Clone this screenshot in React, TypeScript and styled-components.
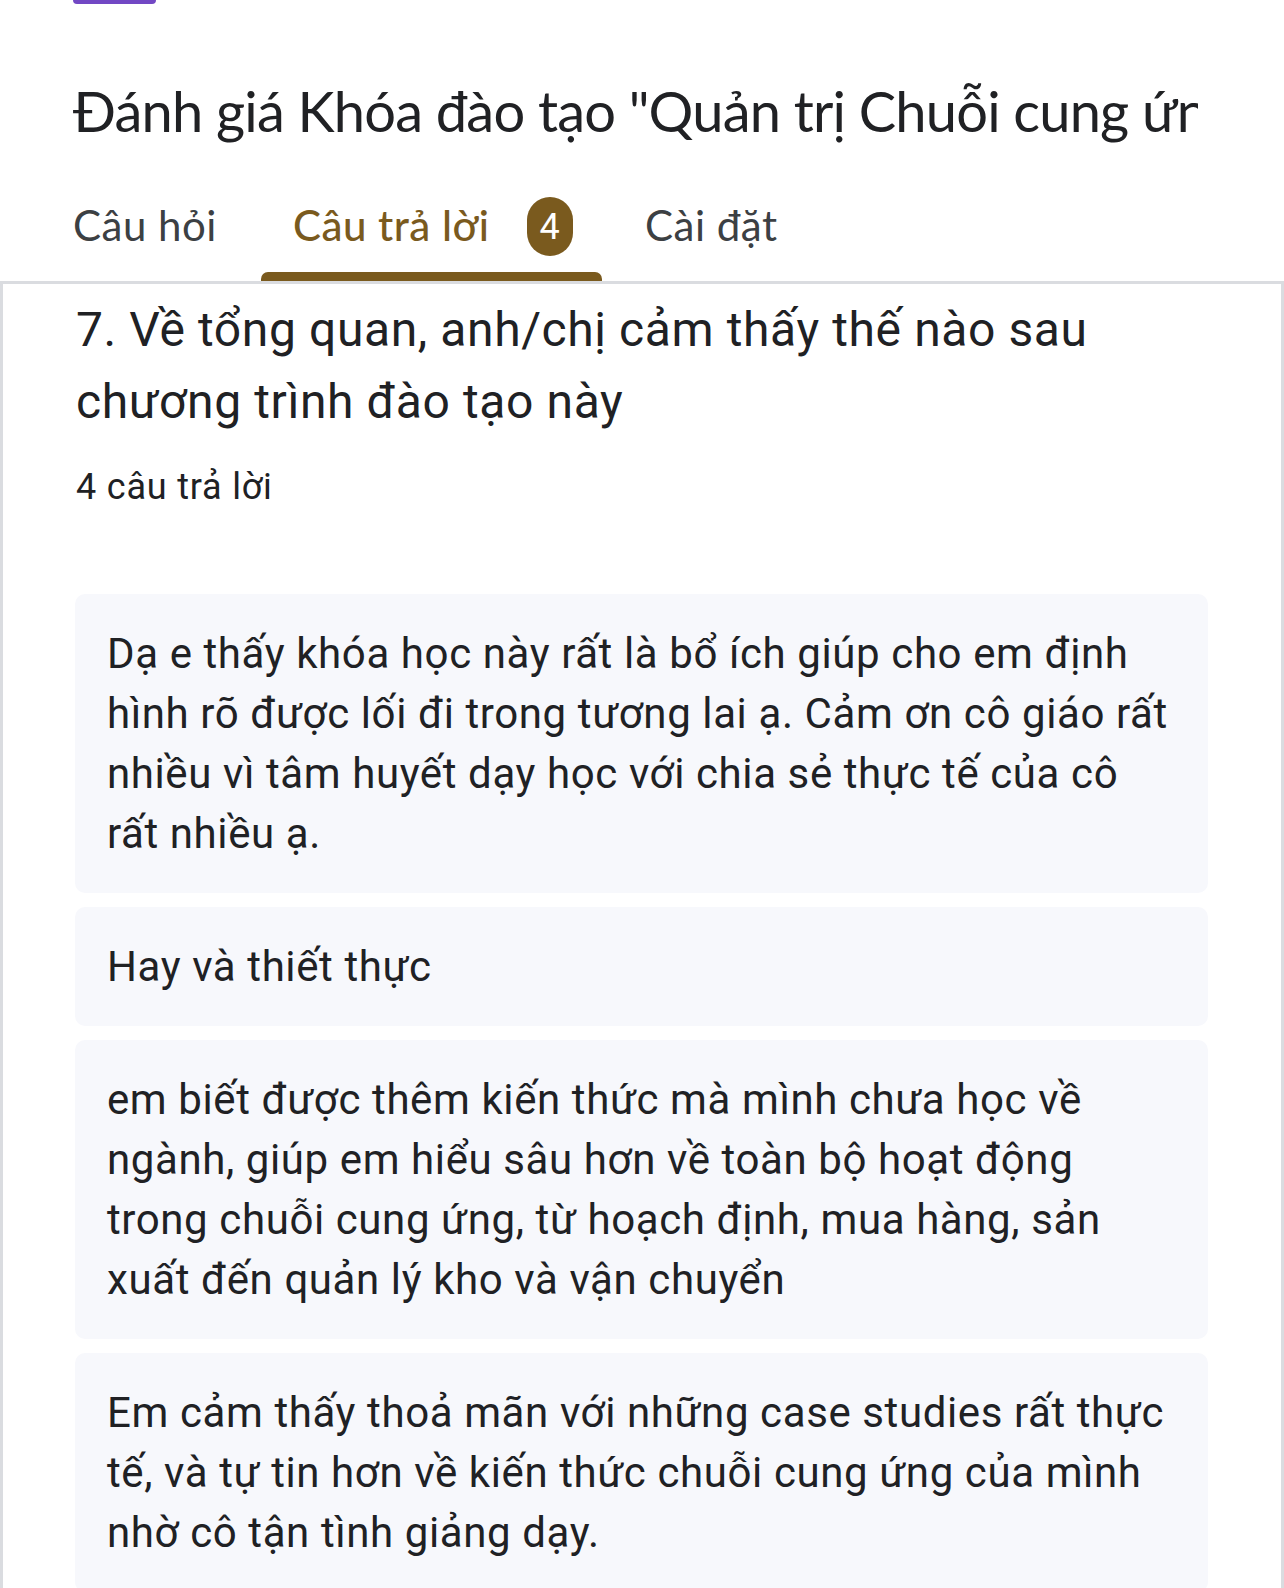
import React from "react";
import styled, { createGlobalStyle } from "styled-components";

const GlobalStyle = createGlobalStyle`
  html, body {
    margin: 0;
    padding: 0;
    background: #ffffff;
  }
  body {
    width: 1284px;
    height: 1588px;
    overflow: hidden;
    font-family: Roboto, "Liberation Sans", sans-serif;
    -webkit-font-smoothing: antialiased;
  }
  * { box-sizing: border-box; }
`;

const Page = styled.div`
  width: 1284px;
  height: 1588px;
  display: flex;
  flex-direction: column;
  overflow: hidden;
  background: #ffffff;
`;

const Header = styled.header`
  display: flex;
  flex-direction: column;
`;

const AccentBar = styled.div`
  margin-left: 73px;
  width: 83px;
  height: 4px;
  background: #7248c4;
  border-radius: 0 0 4px 4px;
`;

const Title = styled.h1`
  margin: 67px 0 0 73px;
  width: 1125px;
  overflow: hidden;
  white-space: nowrap;
  font-family: Lato, "Liberation Sans", sans-serif;
  font-weight: 400;
  font-size: 56px;
  line-height: 80px;
  letter-spacing: -0.8px;
  color: #202124;
`;

const Tabs = styled.nav`
  display: flex;
  align-items: flex-end;
  margin-top: 40px;
  padding-left: 73px;
`;

const Tab = styled.div<{ $active?: boolean; $width: number; $pad: number }>`
  position: relative;
  display: flex;
  align-items: center;
  gap: 37px;
  width: ${(p) => p.$width}px;
  height: 90px;
  padding: 0 0 23px ${(p) => p.$pad}px;
  font-family: Lato, "Liberation Sans", sans-serif;
  font-size: 42px;
  letter-spacing: 0.5px;
  font-weight: ${(p) => (p.$active ? 500 : 400)};
  color: ${(p) => (p.$active ? "#7a5a1e" : "#3c4043")};
`;

const Indicator = styled.span`
  position: absolute;
  left: 0;
  right: 0;
  bottom: 0;
  height: 9px;
  background: #7a5a1e;
  border-radius: 7px 7px 0 0;
`;

const Badge = styled.span`
  display: inline-flex;
  align-items: center;
  justify-content: center;
  width: 46px;
  height: 59px;
  margin-top: 4px;
  border-radius: 23px;
  background: #7a5a1e;
  color: #ffffff;
  font-family: Roboto, "Liberation Sans", sans-serif;
  font-size: 36px;
  letter-spacing: 0;
  font-weight: 400;
`;

const Card = styled.section`
  flex: 1;
  display: flex;
  flex-direction: column;
  border: 3px solid #dadce0;
  border-bottom: none;
  padding: 10px 73px 0 72px;
  background: #ffffff;
`;

const Question = styled.h2`
  margin: 0;
  padding-left: 1px;
  font-family: Roboto, "Liberation Sans", sans-serif;
  font-weight: 400;
  font-size: 48px;
  line-height: 72px;
  letter-spacing: 0.6px;
  color: #202124;
`;

const Count = styled.div`
  margin-top: 22px;
  padding-left: 1px;
  font-family: Roboto, "Liberation Sans", sans-serif;
  font-size: 36px;
  line-height: 54px;
  letter-spacing: 0.8px;
  color: #202124;
`;

const Answers = styled.div`
  display: flex;
  flex-direction: column;
  gap: 14px;
  margin-top: 80px;
`;

const Answer = styled.div`
  background: #f7f8fc;
  border-radius: 10px;
  padding: 30px 20px 29px 32px;
  font-family: Roboto, "Liberation Sans", sans-serif;
  font-size: 42px;
  line-height: 60px;
  letter-spacing: 0.6px;
  color: #202124;
`;

const answers: string[][] = [
  [
    "Dạ e thấy khóa học này rất là bổ ích giúp cho em định",
    "hình rõ được lối đi trong tương lai ạ. Cảm ơn cô giáo rất",
    "nhiều vì tâm huyết dạy học với chia sẻ thực tế của cô",
    "rất nhiều ạ.",
  ],
  ["Hay và thiết thực"],
  [
    "em biết được thêm kiến thức mà mình chưa học về",
    "ngành, giúp em hiểu sâu hơn về toàn bộ hoạt động",
    "trong chuỗi cung ứng, từ hoạch định, mua hàng, sản",
    "xuất đến quản lý kho và vận chuyển",
  ],
  [
    "Em cảm thấy thoả mãn với những case studies rất thực",
    "tế, và tự tin hơn về kiến thức chuỗi cung ứng của mình",
    "nhờ cô tận tình giảng dạy.",
  ],
];

export default function App() {
  return (
    <>
      <GlobalStyle />
      <Page>
        <Header>
          <AccentBar />
          <Title>Đánh giá Khóa đào tạo "Quản trị Chuỗi cung ứng"</Title>
          <Tabs>
            <Tab $width={188} $pad={0}>Câu hỏi</Tab>
            <Tab $active $width={341} $pad={32}>
              Câu trả lời
              <Badge>4</Badge>
              <Indicator />
            </Tab>
            <Tab $width={320} $pad={43}>Cài đặt</Tab>
          </Tabs>
        </Header>
        <Card>
          <Question>
            7. Về tổng quan, anh/chị cảm thấy thế nào sau
            <br />
            chương trình đào tạo này
          </Question>
          <Count>4 câu trả lời</Count>
          <Answers>
            {answers.map((lines, i) => (
              <Answer key={i}>
                {lines.map((l, j) => (
                  <React.Fragment key={j}>
                    {j > 0 && <br />}
                    {l}
                  </React.Fragment>
                ))}
              </Answer>
            ))}
          </Answers>
        </Card>
      </Page>
    </>
  );
}
